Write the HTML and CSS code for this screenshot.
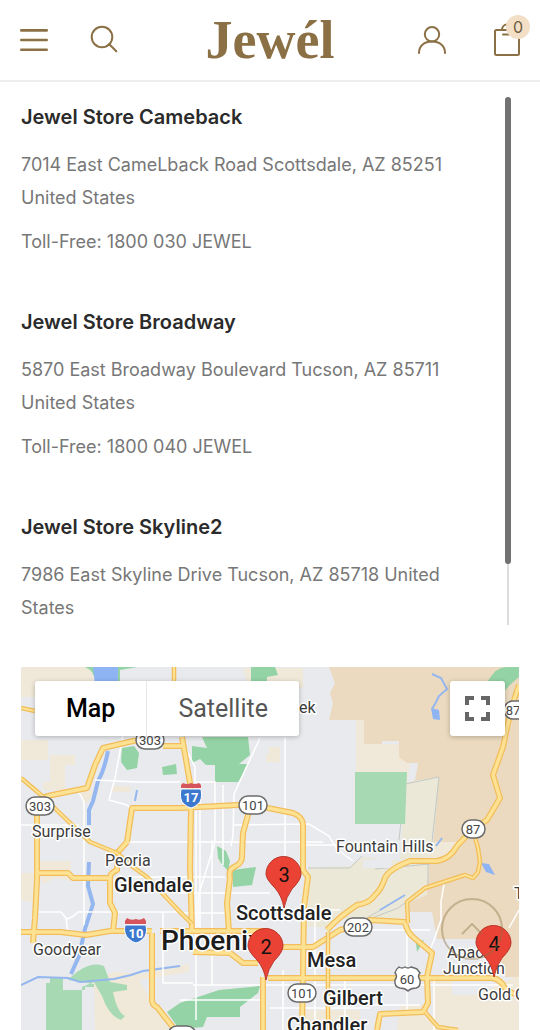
FILE: index.html
```html
<!DOCTYPE html>
<html lang="en">
<head>
<meta charset="utf-8">
<meta name="viewport" content="width=device-width, initial-scale=1">
<title>Jewél – Store locations</title>
<link rel="stylesheet" href="styles.css">
</head>
<body>
<header class="site-header">
  <div class="header-group">
    <button class="icon-button" aria-label="Menu">
      <svg width="28" height="28" viewBox="0 0 28 28" class="icon icon-bold"><path d="M1.3 4.4h25.4M1.3 14h25.4M1.3 23.8h25.4"/></svg>
    </button>
    <button class="icon-button" aria-label="Search">
      <svg width="28" height="28" viewBox="0 0 28 28" class="icon"><circle cx="12" cy="11" r="10.3"/><path d="M19.3 18.3l7 7"/></svg>
    </button>
  </div>
  <a class="logo" href="#">Jewél</a>
  <div class="header-group header-group-end">
    <button class="icon-button" aria-label="Account">
      <svg width="28" height="28" viewBox="0 0 28 28" class="icon"><circle cx="14" cy="8.300" r="7.200"/><path d="M1 27c0-7.500 5.500-11.500 13-11.500S27 19.500 27 27"/></svg>
    </button>
    <button class="icon-button bag" aria-label="Cart, 0 items">
      <svg width="26" height="32" viewBox="0 0 26 32" class="icon"><path d="M2.500 6h21Q25 6 25 7.500v22q0 1.500-1.500 1.500h-21Q1 31 1 29.500v-22Q1 6 2.500 6zM8 6c0-3 2-5.500 5-5.500M9 10.500h6"/></svg>
      <span class="badge">0</span>
    </button>
  </div>
</header>
<main class="page">
  <section class="stores" aria-label="Stores">
    <div class="store-list">
      <article class="store">
        <h2>Jewel Store Cameback</h2>
        <p>7014 East CameLback Road Scottsdale, AZ 85251<br>United States</p>
        <p>Toll-Free: 1800 030 JEWEL</p>
      </article>
      <article class="store">
        <h2>Jewel Store Broadway</h2>
        <p>5870 East Broadway Boulevard Tucson, AZ 85711<br>United States</p>
        <p>Toll-Free: 1800 040 JEWEL</p>
      </article>
      <article class="store">
        <h2>Jewel Store Skyline2</h2>
        <p>7986 East Skyline Drive Tucson, AZ 85718 United<br>States</p>
      </article>
    </div>
    <div class="scroll-track"><div class="scroll-thumb"></div></div>
  </section>

  <section class="map" aria-label="Store map">
    <svg class="map-canvas" viewBox="21 667 498 363" preserveAspectRatio="xMidYMin slice">
      <rect class="land" x="21" y="667" width="498" height="363"/>
      <g class="cream">
        <path d="M21 667h72v18H60v12H21zM21 740h27v20H21zM50 755h25v10h-10v25H43v-8h7zM78 790h22l-15 14zM112 786h18v6h-18zM39 861h32v20l-16-3-12 6-4-10zM21 873h16v30l-16-3z"/>
        <path d="M243 668h60v20h-26l-30-4zM269 747h11v15h-14v-8h3zM356 719h8v53h-8zM364 720l18 24h18l8 20h10l-4 18-9 2v-12h-42z"/>
        <path d="M94 980l20-8 30 2 45-10v8l-50 8 30 50H95zM300 1010h60v20h-60zM400 1005h25l12 25h-40zM432 975h20v20h25l42-20v55h-85z"/>
      </g>
      <path class="desert" d="M329 667h190v310h-14l-1-12-28-26h-39l-5-27h-23l-2-12 21-22 1-31 4-3 6-67-25 4 4-18h-11l-8-6v-16h-17v3h-18v-24h-35l4-17-3-10 5-10z"/>
      <path class="parcel" d="M405 784l34-7-7 65-6 22-26-4zM308 868l42-2 14-9 64 6-1 32-20 8-3 17-46 4-19-8-14 11h-17z"/>
      <path class="parcel-line" d="M405 784l34-7-7 65M405 784l-6 56M308 868h42l12-12M428 864v22l-30 22-26 10M384 908l-24 14M375 869l55-5"/>
      <path class="land" d="M363 860l30-2-2 10h-28zM410 764h8l-3 16-8 2z"/>
      <path class="cream" d="M400 860h28v-18h30l-5 15z"/>
      <g class="park">
        <path d="M85 667h52l-17 3v18H95q2-16-10-21zM251 667h24l3 8-11 2v8h-16zM488 681q8-14 18-14h13v10q-10 8-15 15z"/>
        <path d="M122 748l12-2 5 7-2 15-10 2-6-8zM162 767l14-3 1 10-14 1z"/>
        <path d="M202 737h46l2 18-11 9h8l-5 12-4 6h-23v-17h-9l-6-6-8 4v-17l15 2z"/>
        <path d="M217 846l9 5 4 10-2 10-7-8-3-5zM232 870l24-3-4 18-19 2z"/>
        <path d="M167 1012l13-9 39-13 41-4-2 7-18 14v10h-33l-4 10-24 2z"/>
        <path d="M416 943l8-3-7 12z"/>
        <path d="M355 772h52l-2 52h-50z" class="park-soft"/>
        <path class="park-soft" d="M68 980q20-20 36-14l6 16 17 3v5l-14 2q4 20 12 24l-4 4q-12-4-19-24l-8-14-12 5v43H46v-47h4v-6h13v13h22v-3h9v-3z"/>
      </g>
      <g class="water-area">
        <path d="M93 667h25v26H96zM431 708l8 2 1 10-7-1zM481 863l8 1 6 11-9-3z"/>
      </g>
      <g class="water">
        <path class="wide" d="M108 751q-4 20-10 30l-5 20-4 9v15M89 862l-1 24 5 18-8 25-6 27-8 18"/>
        <path d="M137 790l-2 11M432 674l9 4 6 11-8 7-4 8-3 5M21 985l17-8 30 1 12 4 34-3 17-4 12-4 37-5M442 838l-6 8M380 910l25-15"/>
      </g>
      <g class="street">
        <path d="M123 735l-8 43-6 22 18 5 3 3M95 780l42 2h43M180 737l15 30v15h20v60l-17 55v30M21 825h58M123 842h200M79 792l5 10v123M39 912h22l6 7 5-2 6-5h100M66 918l2 15M130 877h95M163 912v71h30"/>
        <path d="M260 738l-26 56-1 42-2 10M285 737v160M233 825l76-1 20 12 8 13 16 12M200 787v145M212 840v145M223 785v80M196 800v220M180 893h90M180 913h50M193 985h320M300 845h58M283 970v60M310 910h30M315 920v110M345 980v50M360 930h70M407 925v90M360 1005h60M434 977v53M444 884l-3 18v18l-7 20-4 10M519 910l-10 18M180 1000h80M270 1008h100"/>
      </g>
      <g class="road-edge">
        <path d="M33 943l2-25 2-38v-75q3-8 15-10l35-7 8-23 8-17 30-7 17-2M163 746h22M182 737l8 46 1 24-1 60 2 65M127 842l5-34h48l57-3h16q20 4 40 8 10 4 10 12v45l5 7-4 30-1 66-1 57"/>
        <path d="M118 852l9-10M118 850l-1 20q-7 3-7 8v25l5 10-2 18M39 873h29l5 5h37M21 932h39l26 3 24-4h42M160 931h105M152 933v67q0 5 5 7l18 23M193 952l37 1 13 10h15M263 1030v-53"/>
        <path d="M253 805l-5 10-5 18-1 22q1 8-8 12-6 3-4 11l-3 25 2 29M283 947h30l27-17 18-5 12-5 35 2q2 10 8 15l19 16-5 24 1 26-5 9-43 2-3 16M327 930q12-13 30-25 13-2 18-10 6-5 10-17 4-9 25-17h27q13-2 20-15l16-17 14-9 13-22-7-23 10-28 5-24 7-26 4-12M268 978h225q8 2 12 10 4 5 14 7"/>
      </g>
      <g class="road">
        <path d="M33 943l2-25 2-38v-75q3-8 15-10l35-7 8-23 8-17 30-7 17-2M163 746h22M182 737l8 46 1 24-1 60 2 65M127 842l5-34h48l57-3h16q20 4 40 8 10 4 10 12v45l5 7-4 30-1 66-1 57"/>
        <path d="M118 852l9-10M118 850l-1 20q-7 3-7 8v25l5 10-2 18M39 873h29l5 5h37M21 932h39l26 3 24-4h42M160 931h105M152 933v67q0 5 5 7l18 23M193 952l37 1 13 10h15M263 1030v-53"/>
        <path d="M253 805l-5 10-5 18-1 22q1 8-8 12-6 3-4 11l-3 25 2 29M283 947h30l27-17 18-5 12-5 35 2q2 10 8 15l19 16-5 24 1 26-5 9-43 2-3 16M327 930q12-13 30-25 13-2 18-10 6-5 10-17 4-9 25-17h27q13-2 20-15l16-17 14-9 13-22-7-23 10-28 5-24 7-26 4-12M268 978h225q8 2 12 10 4 5 14 7"/>
      </g>
      <g class="road-edge minor"><path d="M21 778l19 16 27 26 23 22 27 11 16 14 14 10 33 35 12 12M21 708l14 3M328 932v98M473 830l5 18 2 14-2 10-5 6-8-3-40 13-18 14 1 21M425 1012l13 15 20 3M174 667v14"/></g>
      <g class="road minor"><path d="M21 778l19 16 27 26 23 22 27 11 16 14 14 10 33 35 12 12M21 708l14 3M328 932v98M473 830l5 18 2 14-2 10-5 6-8-3-40 13-18 14 1 21M425 1012l13 15 20 3M174 667v14"/></g>

      <g class="shield">
        <rect x="26" y="797" width="28" height="18" rx="9"/><text x="40" y="811">303</text>
        <rect x="136" y="731" width="28" height="18" rx="9"/><text x="150" y="745">303</text>
        <rect x="239" y="796" width="28" height="18" rx="9"/><text x="253" y="810">101</text>
        <rect x="344" y="918" width="28" height="18" rx="9"/><text x="358" y="932">202</text>
        <rect x="288" y="984" width="28" height="18" rx="9"/><text x="302" y="998">101</text>
        <rect x="462" y="820" width="23" height="18" rx="9"/><text x="473" y="834">87</text>
        <rect x="504" y="701" width="23" height="18" rx="9"/><text x="513" y="715">87</text>
        <rect x="168" y="1026" width="28" height="18" rx="9"/>
        <path d="M399 967q3 2 6 0 3 2 6 0 4 1 6 2l3 4q-3 3 0 7 1 7-4 8-5 0-8 3-3-3-8-3-6-1-5-8 3-4 0-7 1-4 4-6z"/><text x="407" y="984">60</text>
      </g>
      <g class="interstate">
        <path class="blue" d="M181 789h20q2 11-3 15-3 3-7 4-4-1-7-4-5-4-3-15zM125 925h21q2 9-3 14-3 3-7 4-4-1-7-4-6-5-4-14z"/>
        <path class="red" d="M181 788v-3l2-2q4 2 8 0 4 2 8 0l2 2v3zM125 924v-3l2-3q4 3 9 1 4 2 8-1l2 3v3z"/>
        <text x="191" y="802">17</text><text x="136" y="938">10</text>
      </g>
      <g class="place">
        <text x="32" y="837">Surprise</text><text x="105" y="866">Peoria</text><text x="33" y="955">Goodyear</text>
        <text x="336" y="852">Fountain Hills</text><text x="299" y="713">ek</text>
        <text x="447" y="958">Apache</text><text x="443" y="974">Junction</text><text x="478" y="1000">Gold Canyon</text><text x="514" y="899">Tortilla</text>
      </g>
      <g class="place city">
        <text x="114" y="892">Glendale</text><text x="236" y="920">Scottsdale</text><text x="307" y="967">Mesa</text><text x="323" y="1005">Gilbert</text><text x="287" y="1032">Chandler</text>
      </g>
      <text class="place metro" x="161" y="950">Phoenix</text>
      <g class="pin">
        <path d="M284 908q-2-12-9-20-9-9-9-14a17.500 17.500 0 0 1 35 0q0 6-9 15-6 8-8 19z"/><text x="284" y="882">3</text>
        <path d="M266 980q-2-12-9-20-9-9-9-14a17.500 17.500 0 0 1 35 0q0 6-9 15-6 8-8 19z"/><text x="266" y="954">2</text>
        <path d="M494 977q-2-12-9-20-9-9-9-14a17.500 17.500 0 0 1 35 0q0 6-9 15-6 8-8 19z"/><text x="494" y="951">4</text>
      </g>
    </svg>
    <div class="map-controls">
      <div class="map-types">
        <button class="active">Map</button>
        <button>Satellite</button>
      </div>
      <button class="fullscreen" aria-label="Toggle fullscreen view">
        <svg width="25" height="25" viewBox="0 0 25 25"><path d="M2 9V2h7M16 2h7v7M23 16v7h-7M9 23H2v-7"/></svg>
      </button>
    </div>
  </section>
</main>
<button class="to-top" aria-label="Back to top">
  <svg width="22" height="12" viewBox="0 0 22 12"><path d="M1 11L11 1l10 10"/></svg>
</button>
</body>
</html>
```

FILE: styles.css
```css
* { box-sizing: border-box; }

body {
  margin: 0;
  min-height: 100vh;
  display: flex;
  flex-direction: column;
  background: #fff;
  color: #777;
  font-family: Inter, "Open Sans", sans-serif;
}

button {
  margin: 0;
  padding: 0;
  border: 0;
  background: none;
  font: inherit;
  color: inherit;
  cursor: pointer;
}

svg { display: block; }

.site-header {
  display: grid;
  grid-template-columns: 1fr auto 1fr;
  align-items: center;
  height: 82px;
  padding: 0 20px;
  border-bottom: 2px solid #eee;
}

.header-group {
  display: flex;
  align-items: center;
  gap: 42px;
}

.header-group-end {
  justify-content: flex-end;
  gap: 48px;
}

.icon {
  fill: none;
  stroke: #8b7045;
  stroke-width: 2;
  stroke-linecap: round;
  overflow: visible;
}

.icon-bold { stroke-width: 2.6; }

.logo {
  color: #8b7045;
  font: bold 54px/60px "Liberation Serif", serif;
  text-decoration: none;
}

.bag { position: relative; }

.badge {
  position: absolute;
  top: -9px;
  right: -10px;
  width: 24px;
  height: 24px;
  border-radius: 50%;
  background: #f2dfc6;
  color: #6d5c40;
  font-size: 16px;
  line-height: 24px;
  text-align: center;
}

.page {
  flex: 1;
  display: flex;
  flex-direction: column;
  gap: 42px;
  padding: 15px 21px 0;
}

.stores {
  display: flex;
  justify-content: space-between;
  height: 528px;
  padding-right: 8px;
}

.store-list {
  flex: 1;
  display: flex;
  flex-direction: column;
  gap: 44px;
  overflow-y: auto;
  scrollbar-width: none;
}

.store {
  display: flex;
  flex-direction: column;
  gap: 11px;
}

.store h2 {
  margin: 0;
  color: #2b2b2b;
  font-size: 20px;
  font-weight: 600;
  line-height: 40px;
}

.store p {
  margin: 0;
  font-size: 18px;
  line-height: 33px;
}

.scroll-track {
  width: 6px;
  background: linear-gradient(#ddd, #ddd) center / 2px 100% no-repeat;
}

.scroll-thumb {
  height: 467px;
  border-radius: 3px;
  background: #727272;
}

.map {
  position: relative;
  flex: 1;
  min-height: 363px;
  overflow: hidden;
  font-family: Roboto, sans-serif;
}

.map-canvas {
  position: absolute;
  inset: 0;
  width: 100%;
  height: 100%;
}

.map-controls {
  position: relative;
  display: flex;
  justify-content: space-between;
  padding: 14px;
}

.map-types {
  display: flex;
  border-radius: 3px;
  background: #fff;
  box-shadow: 0 1px 5px rgba(0, 0, 0, 0.25);
  color: #565656;
  font-size: 25px;
  line-height: 55px;
}

.map-types button { padding: 0 31px; }

.map-types .active {
  border-right: 1px solid #e6e6e6;
  color: #000;
  font-weight: 500;
}

.fullscreen {
  display: grid;
  place-items: center;
  width: 55px;
  height: 55px;
  border-radius: 3px;
  background: #fff;
  box-shadow: 0 1px 5px rgba(0, 0, 0, 0.25);
}

.fullscreen path {
  fill: none;
  stroke: #666;
  stroke-width: 4;
}

.to-top {
  position: fixed;
  right: 37px;
  bottom: 70px;
  display: grid;
  place-items: center;
  width: 62px;
  height: 62px;
  border: 2px solid #8b7045;
  border-radius: 50%;
  opacity: 0.4;
}

.to-top path {
  fill: none;
  stroke: #8b7045;
  stroke-width: 2;
}

/* Map layers */
.land { fill: #e8eaed; }
.cream { fill: #f0e8d8; }
.desert { fill: #ebdabf; }
.parcel { fill: #ebe8d7; }
.parcel-line { fill: none; stroke: #c3c9c4; stroke-width: 1; }
.park { fill: #94d3a5; }
.park-soft { fill: #a7dab3; }
.water-area { fill: #8fb4f4; }
.water { fill: none; stroke: #94b7ef; stroke-width: 2; }
.water .wide { stroke-width: 4; }
.street { fill: none; stroke: #fff; stroke-width: 1.5; }

.road-edge,
.road {
  fill: none;
  stroke: #f2bd5a;
  stroke-width: 6;
  stroke-linejoin: round;
}

.road { stroke: #fde293; stroke-width: 3.5; }
.road-edge.minor { stroke-width: 4.5; }
.road.minor { stroke-width: 2; }

.shield {
  fill: #fff;
  stroke: #6b6b6b;
  stroke-width: 1.5;
}

.shield text {
  fill: #444;
  stroke: none;
  font-size: 13px;
  text-anchor: middle;
}

.interstate text {
  fill: #fff;
  font-size: 13px;
  font-weight: 700;
  text-anchor: middle;
}

.blue { fill: #3b78ce; stroke: #fff; stroke-width: 1; }
.red { fill: #d6545b; }

.place {
  fill: #3c3c3c;
  stroke: #fff;
  stroke-width: 3px;
  stroke-linejoin: round;
  paint-order: stroke;
  font-size: 16px;
}

.city {
  fill: #222;
  font-size: 20px;
  font-weight: 500;
}

.metro {
  fill: #1c1c1c;
  font-size: 28px;
  font-weight: 500;
}

.pin path { fill: #ea4335; stroke: #b93529; stroke-width: 1; }

.pin text {
  fill: #111;
  font-size: 20px;
  text-anchor: middle;
}
```
